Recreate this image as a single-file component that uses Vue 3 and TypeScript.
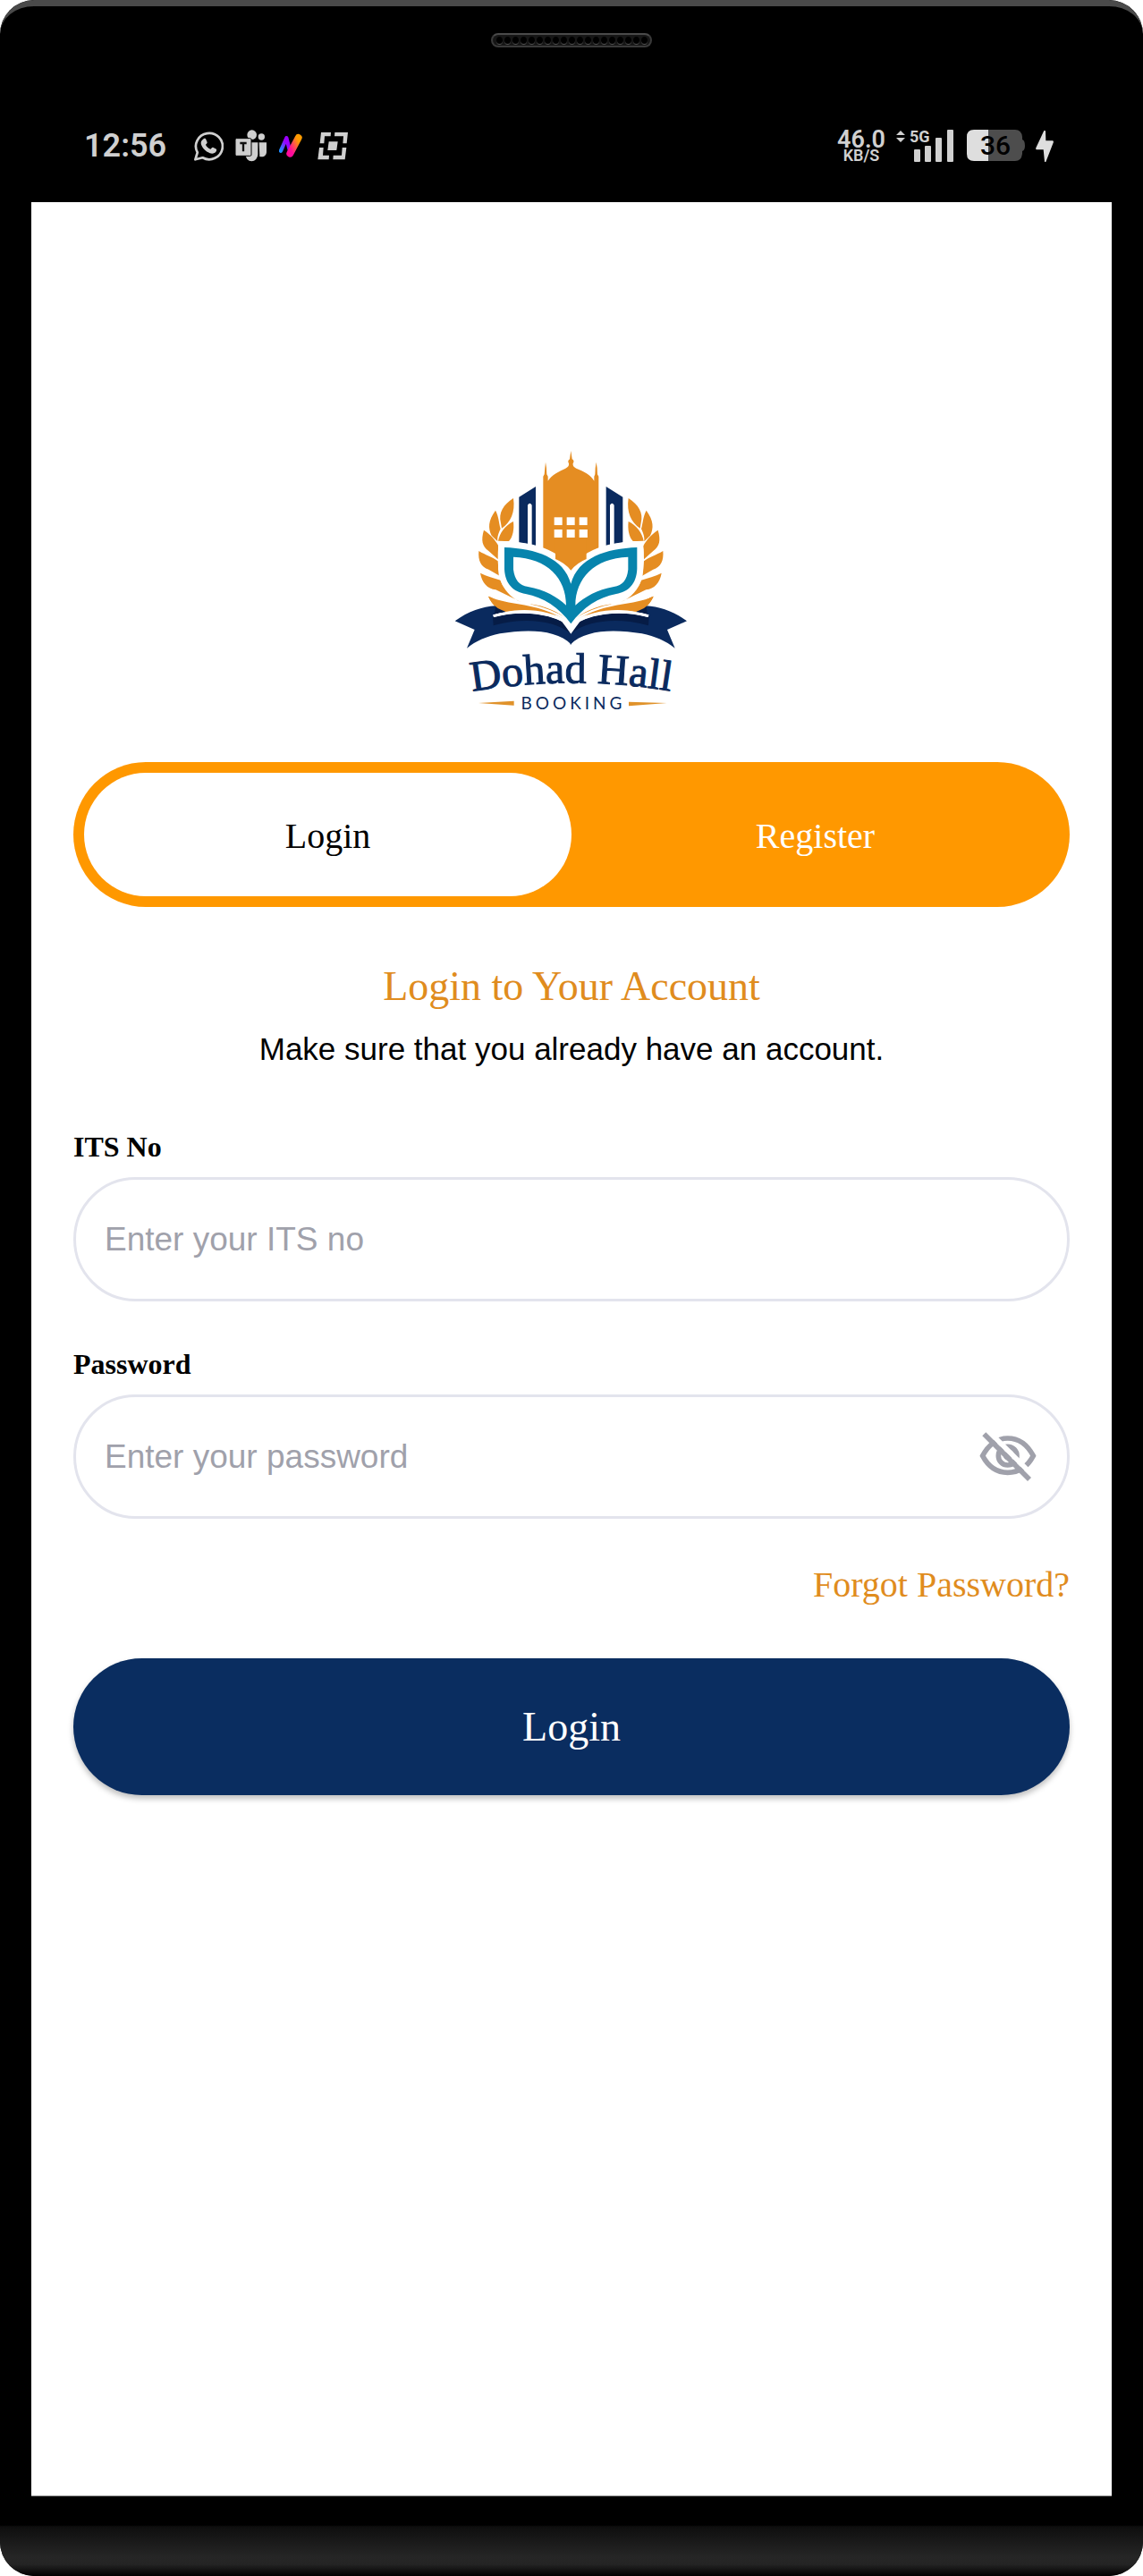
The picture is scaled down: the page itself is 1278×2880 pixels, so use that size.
<script setup lang="ts">
import { ref } from 'vue'

type Mode = 'login' | 'register'

const tabs: { id: Mode; label: string }[] = [
  { id: 'login', label: 'Login' },
  { id: 'register', label: 'Register' },
]
const mode = ref<Mode>('login')
const itsNo = ref('')
const password = ref('')
const showPassword = ref(false)

const leaves = [
  'M255 201C222 222 204 250 213 284L216 302C246 282 262 248 255 201Z',
  'M255 279C228 292 208 318 204 345L240 345C254 330 258 304 255 279Z',
  'M195 242C170 276 170 302 182 326L202 346C200 332 206 316 212 304C206 282 206 262 195 242Z',
  'M156 308C146 342 150 362 172 378L203 406C204 388 202 376 206 362C192 338 178 322 156 308Z',
  'M139 378C136 410 146 432 172 440L210 462C204 434 204 424 203 412C186 398 162 392 139 378Z',
  'M144 452C150 486 168 504 196 508L282 550C244 534 222 506 212 476C190 468 166 464 144 452Z',
  'M171 530C184 560 204 574 228 582C300 568 380 578 440 614C416 590 380 572 340 563C280 550 220 554 171 530Z',
]
</script>

<template>
  <div class="phone">
    <header class="top">
      <div class="speaker">
        <i v-for="n in 19" :key="n"></i>
      </div>
      <div class="status">
        <span class="clock">12:56</span>
        <div class="apps">
          <svg width="34" height="34" viewBox="0 0 100 100" aria-label="WhatsApp">
            <path d="M7 95L14 72A44 43 0 1 1 31 89Z" fill="none" stroke="#d0d0d0" stroke-width="8" stroke-linejoin="round" />
            <path d="M34 27c3-2 7-2 8 2l4 9c1 3-3 6-5 8 3 7 9 12 16 15 3-2 5-7 8-6l10 5c3 2 2 6 0 9-4 6-12 8-20 5C40 69 30 57 26 45c-2-8 2-14 8-18z" fill="#d0d0d0" />
          </svg>
          <svg width="36" height="36" viewBox="0 0 108 108" aria-label="Teams">
            <g fill="#d0d0d0">
              <circle cx="56" cy="17" r="16" />
              <circle cx="88" cy="24" r="11" />
              <path d="M34 43H76V82A21 24 0 0 1 34 82Z" />
              <path d="M80 43H105V74C105 86 95 94 82 90Z" />
              <rect x="0" y="29" width="54" height="59" rx="4" stroke="#000" stroke-width="3" />
            </g>
            <path d="M16 45H38M27 45V73" fill="none" stroke="#111" stroke-width="7" />
          </svg>
          <svg width="26" height="28" viewBox="0 0 78 84" aria-label="Notifications">
            <defs>
              <linearGradient id="warm" x1="1" y1="0" x2="0" y2="1">
                <stop offset="0.1" stop-color="#ff9b00" />
                <stop offset="0.85" stop-color="#ff0a9c" />
              </linearGradient>
              <linearGradient id="cool" x1="0" y1="1" x2="1" y2="0">
                <stop offset="0.1" stop-color="#1f8cff" />
                <stop offset="0.6" stop-color="#9b00ff" />
              </linearGradient>
            </defs>
            <path d="M6 59L25 16L38 66" fill="none" stroke="url(#cool)" stroke-width="13" stroke-linecap="round" stroke-linejoin="round" />
            <path d="M37 68L65 15" fill="none" stroke="url(#warm)" stroke-width="24" stroke-linecap="round" />
          </svg>
          <svg class="scan" width="34" height="31" viewBox="0 0 102 93" aria-label="Scan">
            <g fill="#d0d0d0">
              <path d="M12 0H45L44 13H24L22 37H8Z" />
              <path d="M58 0H102L98 37H85L87 13H57Z" />
              <path d="M6 51H20L18 77H39L38 91H1Z" />
              <path d="M83 51H97L92 91H52L53 77H81Z" />
              <path d="M38 31H68L64 60H34Z" />
            </g>
          </svg>
        </div>
        <div class="system">
          <div class="speed">
            <span class="rate">46.0</span>
            <span class="unit">KB/S</span>
          </div>
          <div class="network">
            <svg width="64" height="48" viewBox="0 -6 64 48" aria-label="Signal">
              <path d="M5 1L10 6H0ZM0 9H10L5 14Z" fill="#d0d0d0" />
              <g fill="#d0d0d0">
                <rect x="20" y="22" width="7" height="14" rx="1" />
                <rect x="32" y="18" width="7" height="18" rx="1" />
                <rect x="44" y="9" width="7" height="27" rx="1" />
                <rect x="57" y="0" width="7" height="36" rx="1" />
              </g>
              <text x="15" y="14" class="gen">5G</text>
            </svg>
          </div>
          <svg class="battery" width="65" height="36" viewBox="0 0 65 36" aria-label="Battery">
            <path d="M8 0H24V35H8Q0 35 0 27V8Q0 0 8 0Z" fill="#dedede" />
            <path d="M24 0H54Q61 0 62 8V11Q65 12 65 18Q65 23 62 24V27Q61 35 54 35H24Z" fill="#4d4d4d" />
            <text x="32" y="28" text-anchor="middle" class="charge">36</text>
          </svg>
          <svg width="20" height="35" viewBox="0 0 60 105" aria-label="Charging">
            <path d="M28 0L0 60L2 64H26L30 105H34L60 38L58 34H34L33 1Z" fill="#dedede" />
          </svg>
        </div>
      </div>
    </header>

    <main class="screen">
      <svg class="logo" width="300" height="320" viewBox="0 0 300 320" role="img" aria-label="Dohad Hall Booking">
        <defs>
          <path id="arch" d="M39 283Q150 264 264 283" />
        </defs>
        <g transform="scale(0.33333)">
          <path
            d="M355 380V128L359 121L361 100L363 80L366 100L367 121L371 128V143C384 122 410 110 430 101C440 96 442 92 441 84C437 78 439 74 444 70L448 42L452 70C458 74 459 78 455 84C454 92 456 96 466 101C490 110 514 122 526 143V128L529 121L530 100L533 80L536 100L537 121L541 128V380C500 395 468 415 448 443C428 415 396 395 355 380Z"
            fill="#e58d22"
          />
          <g fill="#fff">
            <rect v-for="n in 3" :key="'a' + n" :x="350 + n * 42" y="265" width="27" height="27" />
            <rect v-for="n in 3" :key="'b' + n" :x="350 + n * 42" y="306" width="27" height="27" />
          </g>
          <g v-for="side in 2" :key="side" :transform="side === 2 ? 'translate(896 0) scale(-1 1)' : undefined">
            <path d="M274 197L330 162V362L317 358V224Q310 212 303 224V354L274 350Z" fill="#0a2a5e" />
            <path v-for="leaf in leaves" :key="leaf" :d="leaf" fill="#e58d22" />
            <path d="M59 613C105 580 150 565 196 562L230 584L450 630V692C400 640 300 640 210 655C165 664 130 680 99 704L125 642Z" fill="#0a2a5e" />
            <path d="M196 562L230 583C214 584 202 588 190 596Z" fill="#061c46" />
            <path d="M186 600C290 570 390 590 448 626V655C390 610 290 600 188 628Z" fill="#061c46" />
            <path d="M188 596C290 568 390 586 450 628" fill="none" stroke="#fff" stroke-width="9" />
          </g>
          <path
            d="M225 366C330 370 424 400 448 488C472 400 566 370 670 366V438C668 490 640 510 600 520C540 534 490 560 448 620C406 560 356 534 296 520C256 510 227 490 225 438Z"
            fill="#fff"
            stroke="#fff"
            stroke-width="42"
          />
          <path d="M396 300H500V405Q468 418 448 443Q428 418 396 405Z" fill="#e58d22" />
          <g fill="#fff">
            <rect x="393" y="300" width="26" height="33" />
            <rect x="434" y="300" width="27" height="33" />
            <rect x="476" y="300" width="27" height="33" />
          </g>
          <path d="M385 292H510V306H385Z" fill="#e58d22" />
          <g v-for="side in 2" :key="'p' + side" :transform="side === 2 ? 'translate(896 0) scale(-1 1)' : undefined">
            <path d="M228 580C300 562 380 576 440 614C410 582 360 562 310 556C350 574 280 552 232 545C200 540 188 536 171 530C184 560 204 574 228 580Z" fill="#e58d22" />
            <path d="M188 596C290 568 390 586 450 628" fill="none" stroke="#fff" stroke-width="8" />
            <path d="M186 532C250 560 350 546 448 618" fill="none" stroke="#fff" stroke-width="7" />
          </g>
          <path
            fill-rule="evenodd"
            d="M225 366C330 370 424 400 448 488C472 400 566 370 670 366V438C668 490 640 515 600 522C540 534 490 565 448 622C406 565 356 534 296 522C256 515 227 490 225 438ZM255 398V440C260 476 274 492 304 498C360 508 402 532 432 560C432 470 370 402 255 398ZM640 398V440C636 476 622 492 592 498C536 508 494 532 463 560C464 470 526 402 640 398Z"
            fill="#0784ad"
          />
          <path d="M138 888L257 881V896ZM770 888L642 884V898Z" fill="#e0922a" />
        </g>
        <text class="wordmark"><textPath href="#arch">Dohad Hall</textPath></text>
        <text class="tagline" x="152" y="303" text-anchor="middle">BOOKING</text>
      </svg>

      <div class="tabs" role="tablist">
        <button
          v-for="tab in tabs"
          :key="tab.id"
          type="button"
          role="tab"
          class="tab"
          :class="{ active: mode === tab.id }"
          :aria-selected="mode === tab.id"
          @click="mode = tab.id"
        >
          {{ tab.label }}
        </button>
      </div>

      <h1 class="title">Login to Your Account</h1>
      <p class="hint">Make sure that you already have an account.</p>

      <form class="form" @submit.prevent>
        <div class="field">
          <label for="its">ITS No</label>
          <div class="box">
            <input id="its" v-model="itsNo" type="text" placeholder="Enter your ITS no" />
          </div>
        </div>
        <div class="field">
          <label for="password">Password</label>
          <div class="box">
            <input id="password" v-model="password" :type="showPassword ? 'text' : 'password'" placeholder="Enter your password" />
            <button type="button" class="eye" aria-label="Show password" @click="showPassword = !showPassword">
              <svg width="64" height="56" viewBox="0 0 192 168">
                <g fill="none" stroke="#a0a1ab" stroke-width="17">
                  <path d="M11 80C30 44 60 21 95 21C132 21 162 44 181 80C162 116 132 136 95 136C60 136 30 116 11 80Z" />
                  <circle cx="95" cy="80" r="31" />
                </g>
                <circle cx="95" cy="80" r="14" fill="#a0a1ab" />
                <path d="M30 -4L190 156" stroke="#fff" stroke-width="17" />
                <path d="M16 7L168 159" stroke="#a0a1ab" stroke-width="17" />
              </svg>
            </button>
          </div>
        </div>
        <a class="forgot" href="#">Forgot Password?</a>
        <button class="submit" type="submit">Login</button>
      </form>
    </main>

    <footer class="chin"></footer>
  </div>
</template>

<style>
body {
  margin: 0;
  background: #fff;
}
</style>

<style scoped>
* {
  box-sizing: border-box;
}
.phone {
  display: flex;
  flex-direction: column;
  min-height: 100vh;
  overflow: hidden;
  background: #000;
  border-radius: 38px;
  font-family: 'Liberation Serif', serif;
}
.top {
  display: flex;
  flex-direction: column;
  align-items: center;
  height: 226px;
  padding-top: 30px;
  border-top: 7px solid #4a4a4a;
  border-radius: 38px 38px 0 0;
}
.speaker {
  display: flex;
  align-items: center;
  justify-content: center;
  gap: 2px;
  width: 180px;
  height: 16px;
  border: 2px solid #3a3a3a;
  border-top-color: #4a4a4a;
  border-radius: 8px;
  background: #161616;
}
.speaker i {
  width: 7px;
  height: 9px;
  border-bottom: 1px solid #555;
  border-radius: 50%;
  background: #000;
}
.status {
  display: flex;
  align-items: center;
  align-self: stretch;
  margin-top: 88px;
  height: 44px;
  padding: 0 100px 0 94px;
  color: #d0d0d0;
  font-family: Roboto, sans-serif;
}
.clock {
  font-size: 36px;
  line-height: 44px;
  font-weight: 600;
}
.apps {
  display: flex;
  align-items: center;
  gap: 13px;
  margin-left: 30px;
}
.scan {
  margin-left: 4px;
}
.system {
  display: flex;
  align-items: center;
  margin-left: auto;
  gap: 12px;
}
.speed {
  display: flex;
  flex-direction: column;
  align-items: center;
  font-weight: 600;
}
.rate {
  font-size: 27px;
  line-height: 22px;
}
.unit {
  font-size: 18px;
  line-height: 14px;
}
.network {
  display: flex;
}
.battery {
  margin-left: 3px;
}
.gen {
  font-size: 18px;
  font-weight: 700;
  fill: #d0d0d0;
}
.charge {
  font-size: 30px;
  font-weight: 500;
  fill: #000;
}
.screen {
  display: flex;
  flex-direction: column;
  flex: 1;
  margin: 0 35px;
  padding: 264px 47px 60px;
  border-bottom: 1px solid #888;
  background: #fff;
}
.logo {
  align-self: center;
}
.wordmark {
  font-family: 'Liberation Serif', serif;
  font-size: 48px;
  fill: #0a2a5e;
  stroke: #0a2a5e;
  stroke-width: 1px;
}
.tagline {
  font-family: Lato, sans-serif;
  font-size: 19px;
  letter-spacing: 4px;
  fill: #0a2a5e;
}
.tabs {
  display: flex;
  margin-top: 42px;
  height: 162px;
  padding: 12px;
  border-radius: 81px;
  background: #ff9800;
}
.tab {
  flex: 1;
  padding: 4px 0 0;
  border: 0;
  border-radius: 69px;
  background: transparent;
  color: #fff;
  font-family: inherit;
  font-size: 40px;
  line-height: 48px;
}
.tab.active {
  background: #fff;
  color: #000;
}
.title {
  margin: 59px 0 0;
  color: #e08c1e;
  font-size: 46px;
  line-height: 60px;
  font-weight: 400;
  text-align: center;
}
.hint {
  margin: 16px 0 0;
  color: #000;
  font-family: 'Liberation Sans', sans-serif;
  font-size: 35px;
  line-height: 48px;
  text-align: center;
}
.form {
  display: flex;
  flex-direction: column;
  margin-top: 65px;
}
.field {
  display: flex;
  flex-direction: column;
  gap: 14px;
  margin-bottom: 50px;
}
.field label {
  align-self: flex-start;
  font-size: 32px;
  line-height: 40px;
  font-weight: 700;
}
.box {
  display: flex;
  align-items: center;
  height: 139px;
  padding: 0 34px 0 32px;
  border: 3px solid #e3e4ed;
  border-radius: 70px;
}
.box input {
  flex: 1;
  min-width: 0;
  padding: 0;
  border: 0;
  outline: 0;
  background: transparent;
  color: #000;
  font-family: 'Liberation Sans', sans-serif;
  font-size: 37px;
  line-height: 48px;
}
.box input::placeholder {
  color: #a0a1ab;
  opacity: 1;
}
.eye {
  display: flex;
  padding: 0;
  border: 0;
  background: transparent;
}
.forgot {
  align-self: flex-end;
  color: #e08c1e;
  font-size: 40px;
  line-height: 48px;
  text-decoration: none;
}
.submit {
  margin-top: 58px;
  height: 153px;
  border: 0;
  border-radius: 77px;
  background: #0a2d60;
  box-shadow: 0 4px 6px rgba(0, 0, 0, 0.25);
  color: #fff;
  font-family: inherit;
  font-size: 46px;
  line-height: 60px;
}
.chin {
  height: 89px;
  background: linear-gradient(#000 32px, #0e0e0e 34px, #262626 68px, #242424 76px, #000 89px);
}
</style>
